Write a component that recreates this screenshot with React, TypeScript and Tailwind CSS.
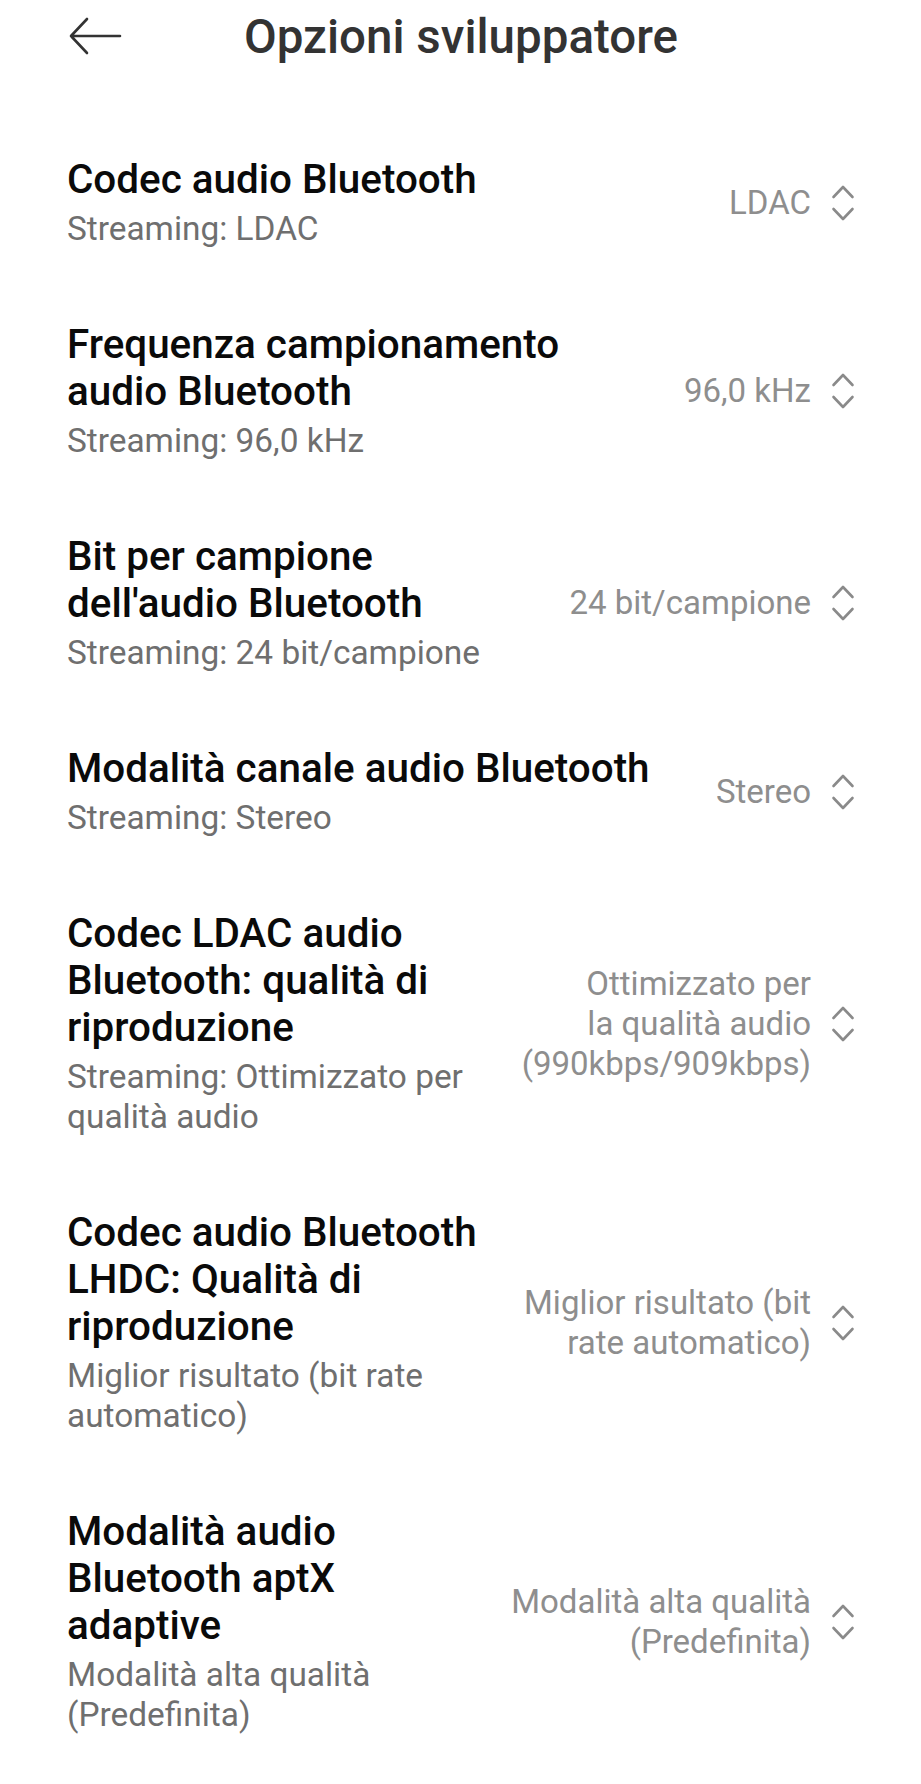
import React from 'react';

interface OptionRow {
  title: string[];
  subtitle: string[];
  value: string[];
}

const rows: OptionRow[] = [
  { title: ['Codec audio Bluetooth'], subtitle: ['Streaming: LDAC'], value: ['LDAC'] },
  {
    title: ['Frequenza campionamento', 'audio Bluetooth'],
    subtitle: ['Streaming: 96,0 kHz'],
    value: ['96,0 kHz'],
  },
  {
    title: ['Bit per campione', "dell'audio Bluetooth"],
    subtitle: ['Streaming: 24 bit/campione'],
    value: ['24 bit/campione'],
  },
  {
    title: ['Modalità canale audio Bluetooth'],
    subtitle: ['Streaming: Stereo'],
    value: ['Stereo'],
  },
  {
    title: ['Codec LDAC audio', 'Bluetooth: qualità di', 'riproduzione'],
    subtitle: ['Streaming: Ottimizzato per', 'qualità audio'],
    value: ['Ottimizzato per', 'la qualità audio', '(990kbps/909kbps)'],
  },
  {
    title: ['Codec audio Bluetooth', 'LHDC: Qualità di', 'riproduzione'],
    subtitle: ['Miglior risultato (bit rate', 'automatico)'],
    value: ['Miglior risultato (bit', 'rate automatico)'],
  },
  {
    title: ['Modalità audio', 'Bluetooth aptX', 'adaptive'],
    subtitle: ['Modalità alta qualità', '(Predefinita)'],
    value: ['Modalità alta qualità', '(Predefinita)'],
  },
];

const BackArrow = () => (
  <svg width="56" height="40" viewBox="0 0 56 40" fill="none" className="shrink-0">
    <path
      d="M5 19 H54 M21 2 L5 19 L21 36"
      stroke="#333333"
      strokeWidth="2.6"
      strokeLinecap="round"
      strokeLinejoin="round"
    />
  </svg>
);

const UpDownChevron = () => (
  <svg width="24" height="40" viewBox="0 0 24 40" fill="none" className="shrink-0">
    <path
      d="M2.5 14 L12 4 L21.5 14 M2.5 26 L12 36 L21.5 26"
      stroke="#8a8a8a"
      strokeWidth="2.6"
      strokeLinecap="round"
      strokeLinejoin="round"
    />
  </svg>
);

const Row: React.FC<{ row: OptionRow }> = ({ row }) => (
  <div className="flex items-center justify-between gap-6">
    <div className="min-w-0">
      <div className="text-[40.4px] leading-[47px] font-medium text-[#0a0a0a]">
        {row.title.map((line) => (
          <div key={line} className="whitespace-nowrap">{line}</div>
        ))}
      </div>
      <div className="mt-[6px] text-[33.4px] leading-[40px] text-[#6f6f6f]">
        {row.subtitle.map((line) => (
          <div key={line} className="whitespace-nowrap">{line}</div>
        ))}
      </div>
    </div>
    <div className="flex items-center gap-[20px] shrink-0">
      <div className="text-right text-[33px] leading-[40px] text-[#8e8e8e]">
        {row.value.map((line) => (
          <div key={line} className="whitespace-nowrap">{line}</div>
        ))}
      </div>
      <UpDownChevron />
    </div>
  </div>
);

export default function App() {
  return (
    <div className="min-h-screen w-full bg-white font-['Roboto',sans-serif]">
      <header className="h-[74px] flex items-center pl-[66px]">
        <BackArrow />
        <h1 className="ml-[122px] text-[47.5px] leading-[55px] font-medium text-[#333333]">
          Opzioni sviluppatore
        </h1>
      </header>

      <main className="pt-[82px] pl-[67px] pr-[66px] flex flex-col gap-[72px]">
        {rows.map((row) => (
          <Row key={row.title.join(' ')} row={row} />
        ))}
      </main>
    </div>
  );
}
